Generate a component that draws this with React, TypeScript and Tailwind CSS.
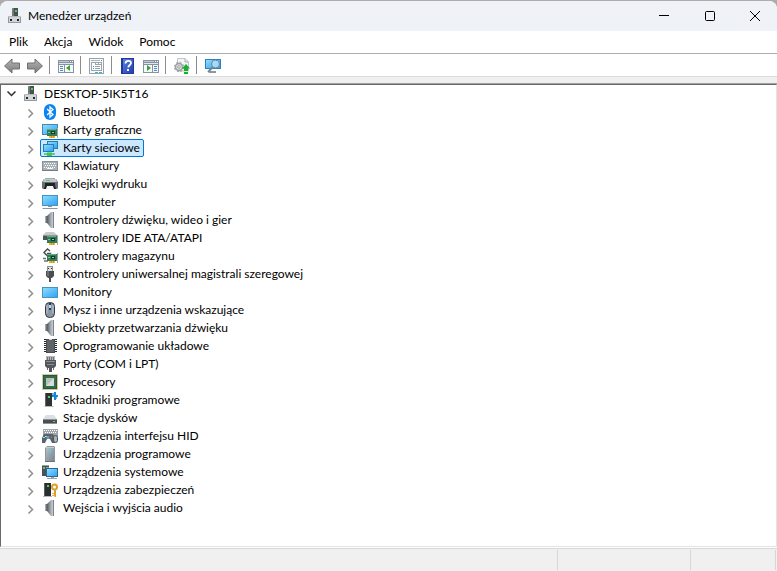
import { useState, type ReactNode } from 'react';

const Svg = ({ children }: { children: ReactNode }) => (
  <svg viewBox="0 0 16 16" className="block size-4 shrink-0" aria-hidden="true">
    {children}
  </svg>
);

const Gradients = () => (
  <svg className="absolute size-0" aria-hidden="true">
    <defs>
      <linearGradient id="screen" x1="0" y1="0" x2="1" y2="1">
        <stop offset="0" stopColor="#8ddcff" />
        <stop offset="1" stopColor="#2fa4f5" />
      </linearGradient>
      <linearGradient id="metal" x1="0" y1="0" x2="1" y2="0">
        <stop offset="0" stopColor="#555b61" />
        <stop offset="0.6" stopColor="#a3a9af" />
        <stop offset="1" stopColor="#c9ced2" />
      </linearGradient>
      <linearGradient id="tower" x1="0" y1="0" x2="1" y2="1">
        <stop offset="0" stopColor="#b5bec6" />
        <stop offset="1" stopColor="#7b858e" />
      </linearGradient>
      <linearGradient id="arrow" x1="0" y1="0" x2="0" y2="1">
        <stop offset="0" stopColor="#b5b5b5" />
        <stop offset="1" stopColor="#7c7c7c" />
      </linearGradient>
      <linearGradient id="help" x1="0" y1="0" x2="1" y2="1">
        <stop offset="0" stopColor="#5b7fe0" />
        <stop offset="1" stopColor="#1f3fae" />
      </linearGradient>
    </defs>
  </svg>
);

// green expansion card, shared by several device classes
const Card = () => (
  <>
    <path d="M5 6h10v7H5z" fill="#2f7d55" />
    <path d="M5 6h9v1H5z" fill="#5fae85" />
    <path d="M15 5h1v10h-1z" fill="#a2a7ab" />
    <path d="M9 8h4v3H9z" fill="#15392a" />
    <path d="M10 9h2v1h-2z" fill="#8fd0ad" />
    <path d="M6 9h2v1H6z" fill="#7cc49c" />
    <path d="M7 13h6v2H7z" fill="#f7b42c" />
    <path d="M9 13h1v2H9zM11 13h1v2h-1z" fill="#dd8f10" />
  </>
);

const ComputerIcon = () => (
  <Svg>
    <path d="M5 1l1-1h5v9H5z" fill="#4b4f52" />
    <path d="M5 1l1-1h1v9H5z" fill="#75797c" />
    <path d="M8 2h2v2H8z" fill="#35e04a" />
    <path d="M2 8h11l1 1v6H1V9z" fill="#94999d" />
    <path d="M2 9h11v5H2z" fill="#d3d6d9" />
    <path d="M2 8h11v1H2z" fill="#b6babd" />
    <path d="M3 11h2v2H3zM10 11h2v2h-2z" fill="#25282b" />
  </Svg>
);

const BluetoothIcon = () => (
  <Svg>
    <rect x="2" y="0" width="12" height="16" rx="6" fill="#0a84f5" />
    <path d="M5 5l6 5.500L8 13V3l3 2.500L5 11" fill="none" stroke="#fff" strokeWidth="1.300" />
  </Svg>
);

const DisplayIcon = () => (
  <Svg>
    <path d="M0 2h16v11H0z" fill="#4589b3" />
    <path d="M1 3h14v9H1z" fill="url(#screen)" />
    <g transform="translate(0 1)"><Card /></g>
  </Svg>
);

const NetworkIcon = () => (
  <Svg>
    <path d="M5 1h11v8H5z" fill="#2b7cae" />
    <path d="M6 2h9v6H6z" fill="url(#screen)" />
    <path d="M1 4h11v8H1z" fill="#2b7cae" />
    <path d="M2 5h9v6H2z" fill="url(#screen)" />
    <path d="M6 12h2v1H6z" fill="#4a7f62" />
    <path d="M2 13h11v2H2z" fill="#5fd07b" />
    <path d="M5 12h5v4H5z" fill="#4abb67" />
    <path d="M5 12h5v1H5z" fill="#79da8f" />
  </Svg>
);

const KeyboardIcon = () => (
  <Svg>
    <path d="M0 3h16v10H0z" fill="#8a9299" />
    <path d="M1 4h14v8H1z" fill="#a9b1b8" />
    <path d="M2 5.500h12M3 7.500h11M2 9.500h12" stroke="#fff" strokeDasharray="1 1" />
    <path d="M5 10h6v1H5z" fill="#f4f6f8" />
    <path d="M0 12h16v1H0z" fill="#747c83" />
  </Svg>
);

const PrinterIcon = () => (
  <Svg>
    <path d="M3 2h10v2H3z" fill="#a8adb1" />
    <path d="M2 3h12l2 3v6l-1 1H1l-1-1V6z" fill="#6b7074" />
    <path d="M2 3h12l1 3H1z" fill="#c3c7ca" />
    <path d="M4 4h4v1H4z" fill="#46d46e" />
    <path d="M3 7h10v2l1 4H2l1-4z" fill="#202326" />
    <path d="M5 10h6l1 3H4z" fill="#f1f3f4" />
  </Svg>
);

const MonitorIcon = ({ stand = false }: { stand?: boolean }) => (
  <Svg>
    <g transform={stand ? 'translate(0 -2)' : undefined}>
      <path d="M0 3h16v11H0z" fill="#4b93bf" />
      <path d="M1 4h14v9H1z" fill="url(#screen)" />
    </g>
    {stand && <path d="M6 12h4v1H6zM1 14h14l1 1H0z" fill="#8a97a1" />}
  </Svg>
);

const SpeakerIcon = () => (
  <Svg>
    <path d="M3 4h3v7H3z" fill="#6d7379" />
    <path d="M3 4h1v7H3z" fill="#a5abb1" />
    <path d="M5 4l4-4h2v16H9l-4-5z" fill="url(#metal)" />
    <path d="M11 0h1v16h-1z" fill="#7c838a" />
  </Svg>
);

const IdeIcon = () => (
  <Svg>
    <path d="M4 2h8l3 3H1z" fill="#c6cacd" />
    <path d="M1 5h14v5H1z" fill="#4e5356" />
    <path d="M1 5h14v1H1z" fill="#92979b" />
    <Card />
  </Svg>
);

const StorageIcon = () => (
  <Svg>
    <path d="M8 3L5.500 1 2 4.500 5.500 8 8 5.500H5" fill="none" stroke="#4b4f52" strokeWidth="1.500" />
    <path d="M1 10.500h3M2 13h4" fill="none" stroke="#6e7275" strokeWidth="1.500" />
    <Card />
  </Svg>
);

const UsbIcon = () => (
  <Svg>
    <path d="M5 0h6v5H5z" fill="#8c9195" />
    <path d="M6 1h4v4H6z" fill="#dadddf" />
    <path d="M6 2h1v1H6zM9 2h1v1H9z" fill="#303336" />
    <path d="M4 5h8v5l-2 2H6l-2-2z" fill="#4b4e51" />
    <path d="M5 5h2v5H5z" fill="#6d7073" />
    <path d="M7 12h2v4H7z" fill="#4c4f52" />
  </Svg>
);

const MouseIcon = () => (
  <Svg>
    <rect x="3.500" y="0.500" width="9" height="15" rx="4" fill="#8a99a8" stroke="#34383d" />
    <path d="M5 3v8M11 3v8" stroke="#bcc7d1" />
    <path d="M7 1h2v7H7z" fill="#34383d" />
    <path d="M7 3h2v3H7z" fill="#b9d9f2" />
  </Svg>
);

const ChipIcon = () => (
  <Svg>
    <path d="M2 1.500h13M2 3.500h13M2 5.500h13M2 7.500h13M2 9.500h13M2 11.500h13M2 13.500h13" stroke="#24272a" />
    <path d="M4 1h9v14H4z" fill="#4a4e51" />
    <path d="M5 2h7v12H5z" fill="#5f6467" />
    <path d="M7 1h3v1H7z" fill="#d0d3d5" />
  </Svg>
);

const PortIcon = () => (
  <Svg>
    <path d="M4 0h9v5H4z" fill="#b4b7b9" />
    <path d="M5.500 1v3M7.500 1v3M9.500 1v3M11.500 1v3" stroke="#6f7376" />
    <path d="M3 4h11v6l-2 2H5l-2-2z" fill="#55585b" />
    <path d="M4 5h9v1H4zM5 8h7v1H5z" fill="#8c8f92" />
    <path d="M5 12h1v2H5zM11 12h1v2h-1z" fill="#6e7174" />
    <path d="M7 12h3v4H7z" fill="#505356" />
  </Svg>
);

const CpuIcon = () => (
  <Svg>
    <path d="M0.500 0.500h15v15H0.500z" fill="none" stroke="#b98f2e" strokeDasharray="1 1" />
    <path d="M1 1h14v14H1z" fill="#22583f" />
    <path d="M2 2h12v12H2z" fill="#2f6f50" />
    <path d="M4 4h8v8H4z" fill="#b9bfbd" />
    <path d="M4 12l8-8v8z" fill="#d8dddb" />
  </Svg>
);

const SoftwareIcon = () => (
  <Svg>
    <path d="M3 1h7v13H3z" fill="#303336" />
    <path d="M3 1h1v13H3z" fill="#606468" />
    <path d="M6 4h2v2H6z" fill="#37e04c" />
    <path d="M3 14h8l1 1H2z" fill="#b4b8bb" />
    <path d="M12 0h2v3h2v2h-2v3h-2V5h-2V3h2z" fill="#1f83d6" />
    <path d="M10 1h2v2h-2zM14 5h1v2h-1z" fill="#62b7f5" />
  </Svg>
);

const DiskIcon = () => (
  <Svg>
    <path d="M4 5h8l3 4H1z" fill="#dcdfe1" />
    <path d="M1 9h14v5H1z" fill="#4a4e51" />
    <path d="M1 9h14v1H1zM1 13h14v1H1z" fill="#8e9295" />
    <path d="M11 11h2v1h-2z" fill="#3fe055" />
  </Svg>
);

const HidIcon = () => (
  <Svg>
    <path d="M1 1h15v8H1z" fill="#a0a6ac" />
    <path d="M2 2.500h13M3 4.500h12" stroke="#fff" strokeDasharray="1 1" />
    <path d="M2 6h9l2 4v5h-3l-2-4H5l-2 4H0v-5z" fill="#5a6369" />
    <path d="M1 9h2v1H1zM3 8h2v1H3z" fill="#c5d0d8" />
    <circle cx="6" cy="9.500" r="1.500" fill="#4aa8e8" />
    <path d="M9 8h1v2H9z" fill="#e05340" />
    <rect x="11.500" y="7.500" width="4" height="7" rx="2" fill="#a5b2bd" stroke="#4b5157" />
  </Svg>
);

const TowerIcon = () => (
  <Svg>
    <path d="M4 1l1-1h7l1 1v14H3V2z" fill="#8c969e" />
    <path d="M4 2h8v13H4z" fill="url(#tower)" />
    <path d="M4 1h8v1H4z" fill="#c5ccd2" />
    <path d="M7 4h2v2H7z" fill="#47d7ee" />
    <path d="M3 15h10v1H3z" fill="#69727a" />
  </Svg>
);

const SystemIcon = () => (
  <Svg>
    <path d="M0 1h7v11H0z" fill="#4b5156" />
    <path d="M0 1h7v1H0zM4 3h3v1H4z" fill="#9aa0a5" />
    <path d="M1 3h2v2H1z" fill="#3ddc56" />
    <path d="M4 4h12v9H4z" fill="#2d6890" />
    <path d="M5 5h10v7H5z" fill="url(#screen)" />
    <path d="M9 13h3v1H9zM5 14h10v1H5z" fill="#9aa3a9" />
  </Svg>
);

const SecurityIcon = () => (
  <Svg>
    <path d="M2 1h7v13H2z" fill="#2b2e30" />
    <path d="M2 1h1v13H2z" fill="#5c6063" />
    <path d="M5 3h2v2H5z" fill="#37e04c" />
    <path d="M1 14h9v1H1z" fill="#b4b8bb" />
    <circle cx="12.500" cy="5" r="2.500" fill="none" stroke="#dca02e" strokeWidth="2" />
    <path d="M12 8h2v7h-1l-1-1z" fill="#dca02e" />
    <path d="M10 11h2v1h-2zM10 13h2v1h-2z" fill="#e8b54c" />
  </Svg>
);

const BackIcon = () => (
  <Svg>
    <path d="M0.500 8L8 1v4h7.500v6H8v4z" fill="url(#arrow)" stroke="#707070" strokeLinejoin="round" />
  </Svg>
);

const ForwardIcon = () => (
  <Svg>
    <path d="M15.500 8L8 1v4H0.500v6H8v4z" fill="url(#arrow)" stroke="#707070" strokeLinejoin="round" />
  </Svg>
);

const PaneFrame = () => (
  <>
    <path d="M0 2h16v13H0z" fill="#8793a3" />
    <path d="M1 7h14v7H1z" fill="#f7f8fa" />
    <path d="M1 3h10v1H1z" fill="#c0c9d3" />
    <path d="M12 3h1v1h-1zM14 3h1v1h-1z" fill="#fff" />
    <path d="M1 5h14v1H1z" fill="#e3e7ec" />
  </>
);

const TreePaneIcon = () => (
  <Svg>
    <PaneFrame />
    <path d="M6 7h1v7H6z" fill="#8793a3" />
    <path d="M2 8h3v1H2zM2 10h3v1H2zM2 12h3v1H2z" fill="#4f86c0" />
    <path d="M12 7v6L8 10z" fill="#36a432" />
  </Svg>
);

const ActionPaneIcon = () => (
  <Svg>
    <PaneFrame />
    <path d="M9 7h1v7H9z" fill="#8793a3" />
    <path d="M11 8h3v1h-3zM11 10h3v1h-3zM11 12h3v1h-3z" fill="#4f86c0" />
    <path d="M4 7v6l4-3z" fill="#36a432" />
  </Svg>
);

const PropertiesIcon = () => (
  <Svg>
    <path d="M0 0h15v16H0z" fill="#9ba1a8" />
    <path d="M1 1h13v14H1z" fill="#fafafa" />
    <path d="M2 2h9v1H2z" fill="#aeb4bb" />
    <path d="M12 2h1v1h-1z" fill="#6c737b" />
    <path d="M2 4h11v9H2z" fill="#9ba5b0" />
    <path d="M3 7h9v5H3zM3 5h3v2H3zM7 5h2v1H7zM10 5h2v1h-2z" fill="#fff" />
    <path d="M4 8h1v1H4zM4 10h1v1H4z" fill="#19aee0" />
    <path d="M6 8h5v1H6zM6 10h5v1H6z" fill="#9aa1a8" />
    <path d="M6 14h3v1H6zM10 14h3v1h-3z" fill="#2bb5e3" />
  </Svg>
);

const HelpIcon = () => (
  <Svg>
    <path d="M1 0h13v16H1z" fill="#20399c" />
    <path d="M3 1h10v14H3z" fill="url(#help)" />
    <path d="M5.500 5.500c0-3.500 5.500-3.500 5.500-0.500 0 2-2.700 2-2.700 4.500" fill="none" stroke="#fff" strokeWidth="1.800" />
    <path d="M7 11h2v2H7z" fill="#fff" />
  </Svg>
);

const UpdateIcon = () => (
  <Svg>
    <path d="M3.500 0.500H11L14.500 4v9h-11z" fill="#f3f4f5" stroke="#c3c6c9" />
    <path d="M11 0.500V4h3.500" fill="none" stroke="#a9adb0" />
    <circle cx="5" cy="9" r="3.500" fill="#dfe1e3" stroke="#9a9ea1" strokeWidth="1.500" />
    <circle cx="5" cy="9" r="4.700" fill="none" stroke="#9a9ea1" strokeDasharray="2 1.700" />
    <circle cx="5" cy="9" r="1.300" fill="#fff" stroke="#9a9ea1" />
    <path d="M12 6l4 4.500h-2V13h-4v-2.500H8zM10 14h4v2h-4z" fill="#17b030" />
  </Svg>
);

const ScanIcon = () => (
  <Svg>
    <path d="M0 1h16v10H0z" fill="#3181b6" />
    <path d="M1 2h14v8H1z" fill="url(#screen)" />
    <path d="M4 13h7v2H4z" fill="#8c98a1" />
    <circle cx="10.500" cy="6" r="4" fill="#b5e2fa" fillOpacity="0.800" stroke="#6d8597" />
    <path d="M8 9l-5 5" stroke="#7a868f" strokeWidth="2" />
  </Svg>
);

const categories: { name: string; icon: ReactNode }[] = [
  { name: 'Bluetooth', icon: <BluetoothIcon /> },
  { name: 'Karty graficzne', icon: <DisplayIcon /> },
  { name: 'Karty sieciowe', icon: <NetworkIcon /> },
  { name: 'Klawiatury', icon: <KeyboardIcon /> },
  { name: 'Kolejki wydruku', icon: <PrinterIcon /> },
  { name: 'Komputer', icon: <MonitorIcon stand /> },
  { name: 'Kontrolery dźwięku, wideo i gier', icon: <SpeakerIcon /> },
  { name: 'Kontrolery IDE ATA/ATAPI', icon: <IdeIcon /> },
  { name: 'Kontrolery magazynu', icon: <StorageIcon /> },
  { name: 'Kontrolery uniwersalnej magistrali szeregowej', icon: <UsbIcon /> },
  { name: 'Monitory', icon: <MonitorIcon /> },
  { name: 'Mysz i inne urządzenia wskazujące', icon: <MouseIcon /> },
  { name: 'Obiekty przetwarzania dźwięku', icon: <SpeakerIcon /> },
  { name: 'Oprogramowanie układowe', icon: <ChipIcon /> },
  { name: 'Porty (COM i LPT)', icon: <PortIcon /> },
  { name: 'Procesory', icon: <CpuIcon /> },
  { name: 'Składniki programowe', icon: <SoftwareIcon /> },
  { name: 'Stacje dysków', icon: <DiskIcon /> },
  { name: 'Urządzenia interfejsu HID', icon: <HidIcon /> },
  { name: 'Urządzenia programowe', icon: <TowerIcon /> },
  { name: 'Urządzenia systemowe', icon: <SystemIcon /> },
  { name: 'Urządzenia zabezpieczeń', icon: <SecurityIcon /> },
  { name: 'Wejścia i wyjścia audio', icon: <SpeakerIcon /> },
];

const menus = ['Plik', 'Akcja', 'Widok', 'Pomoc'];

// each inner array is one group, separated by a vertical rule
const toolGroups: { label: string; icon: ReactNode }[][] = [
  [
    { label: 'Wstecz', icon: <BackIcon /> },
    { label: 'Dalej', icon: <ForwardIcon /> },
  ],
  [{ label: 'Pokaż drzewo konsoli', icon: <TreePaneIcon /> }],
  [{ label: 'Właściwości', icon: <PropertiesIcon /> }],
  [
    { label: 'Pomoc', icon: <HelpIcon /> },
    { label: 'Pokaż okienko akcji', icon: <ActionPaneIcon /> },
  ],
  [{ label: 'Aktualizuj sterownik', icon: <UpdateIcon /> }],
  [{ label: 'Skanuj w poszukiwaniu zmian sprzętu', icon: <ScanIcon /> }],
];

function TitleBar() {
  return (
    <header className="flex h-[30px] items-center bg-[#eff3f8] pl-[7px]">
      <ComputerIcon />
      <h1 className="flex-1 pl-[5px]">Menedżer urządzeń</h1>
      <button aria-label="Minimalizuj" className="flex h-full w-[46px] items-center justify-center">
        <svg viewBox="0 0 10 10" className="size-2.5"><path d="M0 4.500h10" stroke="#000" /></svg>
      </button>
      <button aria-label="Maksymalizuj" className="flex h-full w-[46px] items-center justify-center">
        <svg viewBox="0 0 10 10" className="size-2.5"><rect x="0.500" y="0.500" width="9" height="9" rx="1" fill="none" stroke="#000" /></svg>
      </button>
      <button aria-label="Zamknij" className="flex h-full w-11 items-center justify-center">
        <svg viewBox="0 0 10 10" className="size-2.5"><path d="M0 0l10 10M10 0L0 10" stroke="#000" /></svg>
      </button>
    </header>
  );
}

function Toolbar() {
  return (
    <div role="toolbar" className="flex h-[23px] items-center border-b border-[#dcdcdc] pl-px">
      {toolGroups.map((group, i) => (
        <div key={i} className="flex items-center gap-px">
          {i > 0 && <span className="mr-1 ml-[3px] h-[18px] w-px bg-[#8d8d8d]" />}
          {group.map((tool) => (
            <button key={tool.label} aria-label={tool.label} className="flex h-[22px] w-[22px] items-center justify-center pt-0.5">
              {tool.icon}
            </button>
          ))}
        </div>
      ))}
    </div>
  );
}

function DeviceTree() {
  const [expanded, setExpanded] = useState(true);
  const [selected, setSelected] = useState('Karty sieciowe');

  return (
    <ul role="tree" className="flex-1 border-t border-r border-b border-l border-t-[#696969] border-r-[#e3e3e3] border-b-[#e3e3e3] border-l-[#696969] bg-white">
      <li role="treeitem" aria-expanded={expanded}>
        <div className="flex h-[18px] items-center">
          <button aria-label="Rozwiń" className="flex w-[21px] justify-center" onClick={() => setExpanded(!expanded)}>
            <svg viewBox="0 0 9 6" className="h-1.5 w-[9px]"><path d="M0.500 0.500l4 4 4-4" fill="none" stroke="#303030" strokeWidth="1.500" /></svg>
          </button>
          <span className="flex items-center gap-[5px] pl-px"><ComputerIcon />DESKTOP-5IK5T16</span>
        </div>
        {expanded && (
          <ul role="group">
            {categories.map(({ name, icon }) => (
              <li key={name} role="treeitem" aria-selected={selected === name} className="flex h-[18px] items-center pl-5">
                <button aria-label={`Rozwiń ${name}`} className="flex w-[19px] justify-center pt-0.5">
                  <svg viewBox="0 0 6 9" className="h-[9px] w-1.5"><path d="M0.500 0.500l4 4-4 4" fill="none" stroke="#8f8f8f" strokeWidth="1.500" /></svg>
                </button>
                <button
                  onClick={() => setSelected(name)}
                  className={`flex h-[18px] items-center gap-[5px] rounded-xs border px-px pr-[3px] ${selected === name ? 'border-[#0078d7] bg-[#cce8ff]' : 'border-transparent'}`}
                >
                  {icon}
                  {name}
                </button>
              </li>
            ))}
          </ul>
        )}
      </li>
    </ul>
  );
}

export default function App() {
  return (
    <div className="min-h-screen bg-[#aeabaa] pt-px">
      <Gradients />
      <div className="flex min-h-[calc(100vh-1px)] flex-col overflow-hidden rounded-t-lg bg-white font-['Lato',sans-serif] text-[12px] leading-4 whitespace-nowrap text-black">
        <TitleBar />
        <nav className="flex h-[23px] items-center border-b border-[#a9adb5] pl-px">
          {menus.map((menu) => (
            <button key={menu} className="px-2">{menu}</button>
          ))}
        </nav>
        <Toolbar />
        <div className="h-1.5 bg-[#f0f0f0]" />
        <main className="flex flex-1 flex-col border-t border-[#a0a0a0]">
          <DeviceTree />
        </main>
        <footer className="mt-px flex h-[23px] border-t border-[#d7d7d7] bg-[#f0f0f0] pt-px pr-px pb-px">
          <div className="flex-1 border-r border-[#d7d7d7]" />
          <div className="w-[133px] border-r border-[#d7d7d7]" />
          <div className="w-[85px] border-r border-[#d7d7d7]" />
        </footer>
      </div>
    </div>
  );
}
